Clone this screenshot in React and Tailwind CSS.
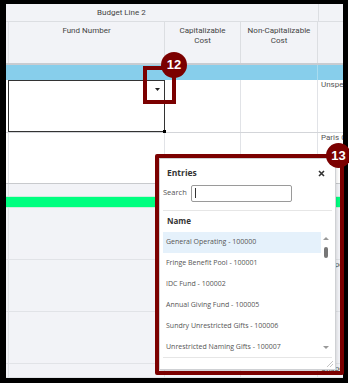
const COLS = 'grid grid-cols-[3px_156px_76px_77px_25px]';

const FUNDS = [
  'General Operating - 100000',
  'Fringe Benefit Pool - 100001',
  'IDC Fund - 100002',
  'Annual Giving Fund - 100005',
  'Sundry Unrestricted Gifts - 100006',
  'Unrestricted Naming Gifts - 100007',
];

function BodyRow({ h, bg = 'bg-[#f2f3f7]', line = 'border-[#e1e3e7]', text, children }) {
  return (
    <div className={`${COLS} ${h} ${bg} border-b ${line}`}>
      <div className="border-r border-[#e1e3e7]" />
      <div className="border-r border-[#e1e3e7]">{children}</div>
      <div className="border-r border-[#e1e3e7]" />
      <div className="border-r border-[#e1e3e7]" />
      <div className="overflow-hidden whitespace-nowrap pl-[3px] leading-[10px] text-[8px] text-[#555]">{text}</div>
    </div>
  );
}

function Badge({ n, className }) {
  return (
    <div className={`absolute rounded-full bg-[#7b0000] flex items-center justify-center text-white font-bold text-[13px] font-['Liberation_Sans',sans-serif] ${className}`}>
      {n}
    </div>
  );
}

export default function App() {
  return (
    <div className="w-[349px] h-[387px] bg-white relative overflow-hidden font-['Roboto',sans-serif]">
      <div className="w-[348px] h-[383px] border-black border-l-[6px] border-t-4 border-r-[5px] border-b-[5px] bg-[#f2f3f7] flex flex-col overflow-hidden">
        {/* header: budget line */}
        <div className={`${COLS} h-[18px] border-b border-[#dcdee2] shrink-0`}>
          <div className="col-span-4 pl-[91px] flex items-center text-[8px] text-[#444]">Budget Line 2</div>
          <div className="border-l border-[#dcdee2]" />
        </div>
        {/* header: columns */}
        <div className={`${COLS} h-[43px] border-b-2 border-[#c9ccd1] shrink-0 text-[8px] leading-[10px] text-[#444] text-center`}>
          <div className="border-r border-[#e1e3e7]" />
          <div className="border-r border-[#dcdee2] pt-[4px]">Fund Number</div>
          <div className="border-r border-[#dcdee2] pt-[4px]">Capitalizable<br />Cost</div>
          <div className="border-r border-[#dcdee2] pt-[4px]">Non-Capitalizable<br />Cost</div>
          <div />
        </div>
        {/* selected row band */}
        <div className={`${COLS} h-[15px] bg-[#87ceeb] shrink-0`}>
          <div className="col-span-4 border-r border-[#a9dcef]" />
          <div />
        </div>
        {/* editing row */}
        <div className={`${COLS} h-[53px] bg-white border-b border-[#d3d5d9] shrink-0`}>
          <div />
          <div className="relative -ml-px border border-[#333]">
            <svg className="absolute top-[7px] right-[4px]" width="5" height="3" viewBox="0 0 5 3">
              <path d="M0 0 H5 L2.5 3 Z" fill="#222" />
            </svg>
            <div className="absolute -bottom-[2px] -right-[2px] w-[3px] h-[3px] bg-black" />
          </div>
          <div className="border-r border-[#e1e3e7]" />
          <div className="border-r border-[#e1e3e7]" />
          <div className="overflow-hidden whitespace-nowrap pl-[3px] leading-[10px] text-[8px] text-[#555]">Unspecified</div>
        </div>
        <BodyRow h="h-[51px] shrink-0" bg="bg-white" line="border-[#c8cacd]" text="Paris Campus" />
        <div className="h-[12px] shrink-0 bg-[#f2f3f7] flex">
          <div className="w-[3px] border-r border-[#e1e3e7]" />
        </div>
        <div className="h-[12px] shrink-0 bg-[#00ff80] border-y border-[#cdeedd]" />
        <BodyRow h="h-[52px] shrink-0" />
        <BodyRow h="h-[52px] shrink-0" text="Unspecified" />
        <BodyRow h="h-[52px] shrink-0" />
        <BodyRow h="flex-1" text="Unspecified" />
      </div>

      {/* callout 12 */}
      <div className="absolute left-[143px] top-[66px] w-[33px] h-[38px] border-4 border-[#7b0000]" />
      <Badge n="12" className="left-[161px] top-[52px] w-[26px] h-[26px]" />

      {/* entries popup */}
      <div className="absolute left-[159px] top-[158px] w-[177px] h-[212px] bg-white border border-[#cfd1d4] shadow-[0_1px_4px_rgba(0,0,0,0.2)] flex flex-col font-['Open_Sans',sans-serif] text-[#444]">
        <div className="h-[21px] mt-[4px] flex items-center justify-between pl-[7px] pr-[10px]">
          <span className="text-[8.5px] font-bold text-[#333]">Entries</span>
          <svg width="7" height="7" viewBox="0 0 7 7">
            <path d="M1 1 L6 6 M6 1 L1 6" stroke="#333" strokeWidth="1.6" />
          </svg>
        </div>
        <div className="h-[18px] flex items-center gap-[4px] pl-[3px]">
          <span className="text-[7.5px] text-[#555]">Search</span>
          <div className="w-[101px] h-[17px] border border-[#9a9a9a] rounded-[2px] flex items-center pl-[3px]">
            <div className="w-px h-[10px] bg-[#333]" />
          </div>
        </div>
        <div className="mt-[8px] mx-[3px] border-t border-[#e6e6e6]" />
        <div className="h-[20px] flex items-center pl-[7px] text-[8px] font-bold text-[#333]">Name</div>
        <div className="mt-[1px] mx-[3px] h-[125px] flex overflow-hidden">
          <div className="w-[158px] flex flex-col">
            {FUNDS.map((f, i) => (
              <div
                key={f}
                className={`h-[21px] shrink-0 flex items-center pl-[3px] text-[7px] text-[#555] whitespace-nowrap ${i === 0 ? 'bg-[#e5f1fb]' : ''}`}
              >
                {f}
              </div>
            ))}
          </div>
          <div className="w-[10px] flex flex-col items-center pt-[5px] pb-[8px]">
            <svg width="6" height="3" viewBox="0 0 6 3"><path d="M0 3 H6 L3 0 Z" fill="#999" /></svg>
            <div className="mt-[7px] w-[4px] h-[11px] rounded-full bg-[#777]" />
            <div className="flex-1" />
            <svg width="6" height="3" viewBox="0 0 6 3"><path d="M0 0 H6 L3 3 Z" fill="#999" /></svg>
          </div>
        </div>
        <div className="mx-[3px] border-t border-[#e6e6e6]" />
        <div className="flex-1 flex items-end justify-end pr-[2px] pb-[2px]">
          <svg width="6" height="6" viewBox="0 0 6 6">
            <path d="M6 0 L0 6 M6 3 L3 6" stroke="#c4c4c4" strokeWidth="1" />
          </svg>
        </div>
      </div>

      {/* callout 13 */}
      <div className="absolute left-[155px] top-[154px] w-[189px] h-[221px] border-4 border-[#7b0000] rounded-[2px]" />
      <Badge n="13" className="left-[326px] top-[143px] w-[25px] h-[25px]" />
    </div>
  );
}
